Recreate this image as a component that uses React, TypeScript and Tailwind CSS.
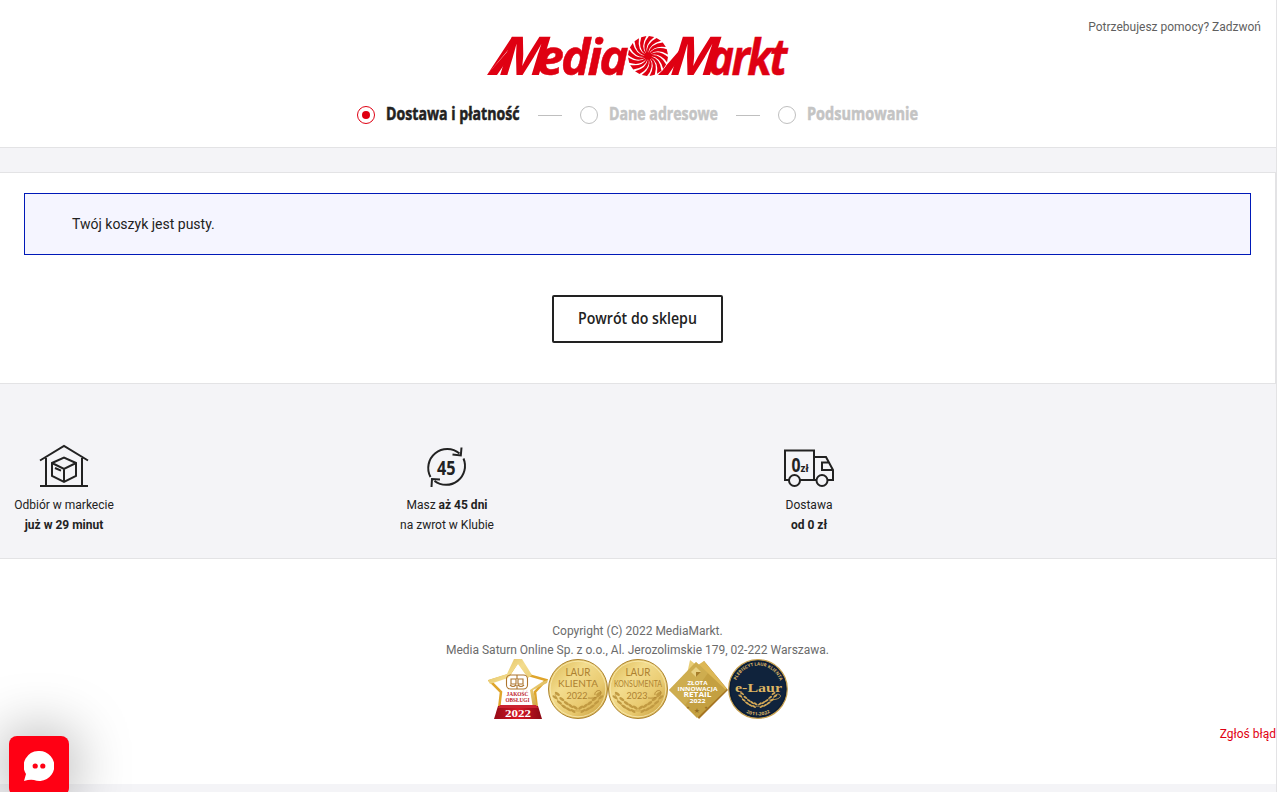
import { useLayoutEffect, useRef, useState, type ReactNode } from 'react';

/** Condenses a single line of text to a given width. */
function Condensed({ width, className, children }: { width: number; className: string; children: ReactNode }) {
  const ref = useRef<HTMLSpanElement>(null);
  const [scale, setScale] = useState(0.78);
  useLayoutEffect(() => {
    if (ref.current) setScale(width / ref.current.offsetWidth);
  }, [width]);
  return (
    <span className="flex" style={{ width }}>
      <span ref={ref} className={`inline-block origin-left whitespace-nowrap ${className}`} style={{ transform: `scaleX(${scale})` }}>
        {children}
      </span>
    </span>
  );
}

const blades = Array.from({ length: 16 }, (_, i) => i * 22.5);

function Logo() {
  return (
    <svg width="300" height="40" viewBox="0 0 300 40" className="mr-px block overflow-visible" fill="#df0012" aria-label="MediaMarkt">
      <g fontFamily="Inter, sans-serif" fontWeight="700">
        <text transform="translate(9 39) skewX(-17)" fontSize="52.500" textLength="45" lengthAdjust="spacingAndGlyphs">M</text>
        <text transform="translate(180 39) skewX(-17)" fontSize="52.500" textLength="45" lengthAdjust="spacingAndGlyphs">M</text>
      </g>
      <path d="M-1 39 31 1H24L-1 39M-1 39 32 1 18 26 9 39ZM170 39 203 1 189 26 180 39Z" />
      <g fontFamily="Open Sans, sans-serif" fontWeight="700" fontStyle="italic" fontSize="51" stroke="#df0012" strokeWidth=".5">
        <text transform="translate(48.500 39)" letterSpacing="-3" textLength="89" lengthAdjust="spacingAndGlyphs">edia</text>
        <text transform="translate(220 39)" letterSpacing="-3" textLength="77" lengthAdjust="spacingAndGlyphs">arkt</text>
      </g>
      <g transform="translate(160 20)">
        <circle r="20.500" fill="#fff" />
        <circle r="3.800" />
        {blades.map((a) => (
          <path key={a} transform={`rotate(${a})`} d="M.300-3Q1-12 13-15.200L8.500-18.100Q-2-12.500-.900-3Z" />
        ))}
      </g>
    </svg>
  );
}

function Step({ label, width, active }: { label: string; width: number; active?: boolean }) {
  return (
    <div className="flex items-center">
      <span className={`mr-[11px] flex size-[18px] items-center justify-center rounded-full border ${active ? 'border-[#df0012]' : 'border-[#bfbfbf]'}`}>
        {active && <span className="size-2 rounded-full bg-[#df0012]" />}
      </span>
      <Condensed width={width} className={`pb-[3px] font-['Open_Sans'] text-[17px] leading-[21px] font-bold [-webkit-text-stroke:0.5px_currentColor] ${active ? 'text-[#222]' : 'text-[#c4c4c4]'}`}>
        {label}
      </Condensed>
    </div>
  );
}

function HouseIcon() {
  return (
    <svg width="50" height="44" viewBox="0 0 50 44" fill="none" stroke="#222" strokeWidth="2">
      <path d="M1 16.500 25 2l24 14.500M7 14v28M43 14v28M1 42h48M13 19l12-5.500L37 19v13l-12 6-12-6ZM13 19l12 6 12-6M25 25v13M16 24l6 2.700" />
    </svg>
  );
}

function ReturnIcon() {
  return (
    <svg width="42" height="44" viewBox="0.500 -1 42 44" fill="none" stroke="#222" strokeWidth="2">
      <path d="M5 32A19 19 0 0 1 34 8.500M38 13.500A19 19 0 0 1 9 36M36 2.500l-.700 8L27 9.500M6 42l.500-8 8 .500" />
      <text x="11.500" y="29.500" fill="#222" stroke="none" fontFamily="Open Sans, sans-serif" fontWeight="700" fontSize="19" textLength="18.500" lengthAdjust="spacingAndGlyphs">45</text>
    </svg>
  );
}

function TruckIcon() {
  return (
    <svg width="50" height="44" viewBox="0 0 50 44" fill="none" stroke="#222" strokeWidth="2" className="mr-px overflow-visible">
      <path d="M5 36H1V6.500h29v29.500H16M30 13h12l7 13v10h-5M30 36h3M45 18.500h-7V26h11" />
      <circle cx="10.500" cy="36.500" r="5.500" />
      <circle cx="38" cy="36.500" r="5.500" />
      <g fill="#222" stroke="none" fontFamily="Open Sans, sans-serif" fontWeight="700">
        <text x="7.500" y="28" fontSize="19.500" textLength="9" lengthAdjust="spacingAndGlyphs">0</text>
        <text x="16.500" y="28" fontSize="10" textLength="8" lengthAdjust="spacingAndGlyphs">zł</text>
      </g>
    </svg>
  );
}

function Benefit({ icon, className, children }: { icon: ReactNode; className: string; children: ReactNode }) {
  return (
    <div className={`flex w-32 flex-col items-center text-center text-xs leading-5 text-[#222] ${className}`}>
      {icon}
      <div className="mt-[7px]">{children}</div>
    </div>
  );
}

function Leaves({ color }: { color: string }) {
  const spots = [-22, -17.5, -13, -8.5, -4, 4, 8.5, 13, 17.5, 22];
  return (
    <g fill={color}>
      <path d="M7 35Q12 53 30 52Q47 53 53 36" fill="none" stroke={color} strokeWidth=".7" />
      {spots.map((x) => {
        const y = 51 - (x * x) / 34;
        const tilt = x < 0 ? 35 : -35;
        return (
          <g key={x} transform={`translate(${30 + x} ${y}) rotate(${tilt})`}>
            <ellipse cx="0" cy="-2.300" rx="3" ry="1.300" />
            <ellipse cx="0" cy="1.800" rx="3" ry="1.200" />
          </g>
        );
      })}
    </g>
  );
}

function Gold({ id }: { id: string }) {
  return (
    <linearGradient id={id} x1="0" y1="0" x2="1" y2="1">
      <stop offset="0" stopColor="#d9b44a" />
      <stop offset=".35" stopColor="#f3dc8e" />
      <stop offset=".65" stopColor="#e9ca70" />
      <stop offset="1" stopColor="#c39735" />
    </linearGradient>
  );
}

function StarBadge() {
  return (
    <svg width="60" height="60" viewBox="0 0 60 60">
      <defs>
        <Gold id="star" />
        <linearGradient id="base">
          <stop offset="0" stopColor="#950a16" />
          <stop offset=".5" stopColor="#d61725" />
          <stop offset="1" stopColor="#8c0914" />
        </linearGradient>
      </defs>
      <path d="M30 2 40 16 58 21 47 33 49 50H11L13 33 2 22 21 16Z" fill="#fff" stroke="#dfa52b" strokeWidth="2.500" />
      <path d="M26 0h8l10 16-4 3L30 5 20 19 2 25 0 21l19-6ZM45 31l5 19-5-1-3-18 12-8 6-2-1 3Z" fill="url(#star)" />
      <path d="M10 47h40l4 13H6Z" fill="url(#base)" />
      <path d="M12 46h36l2 3H10Z" fill="#ca2330" />
      <g fill="none" stroke="#ad742d" strokeWidth="1.100">
        <rect x="18.500" y="16" width="21" height="14" rx="4" />
        <path d="M29 16v4M29 26v4M28 20h-5v5h5ZM30 20h5v5h-5ZM22 26q3 3 6 0M30 26q3 3 6 0" />
      </g>
      <g textAnchor="middle" fontFamily="Liberation Serif, serif" fontWeight="700">
        <text x="29.500" y="37.300" fontSize="5.500" fill="#bd1726" textLength="22" lengthAdjust="spacingAndGlyphs">JAKOŚĆ</text>
        <text x="29.500" y="42.500" fontSize="5.500" fill="#bd1726" textLength="24" lengthAdjust="spacingAndGlyphs">OBSŁUGI</text>
        <text x="30" y="57.500" fontSize="10" fill="#fff" textLength="26" lengthAdjust="spacingAndGlyphs">2022</text>
      </g>
    </svg>
  );
}

function CoinBadge({ id, name, year, nameWidth }: { id: string; name: string; year: string; nameWidth: number }) {
  return (
    <svg width="60" height="60" viewBox="0 0 60 60" className="overflow-visible">
      <defs><Gold id={id} /></defs>
      <circle cx="30" cy="30" r="29.500" fill={`url(#${id})`} stroke="#ad8430" />
      <circle cx="30" cy="30" r="27.800" fill="none" stroke="#f9ebb4" strokeWidth=".8" />
      <Leaves color="#c19a42" />
      <g textAnchor="middle" fill="#ad8130" fontFamily="Lato, sans-serif">
        <text x="30" y="17" fontSize="11" textLength="25" lengthAdjust="spacingAndGlyphs">LAUR</text>
        <text x="30" y="27.500" fontSize="10" textLength={nameWidth} lengthAdjust="spacingAndGlyphs">{name}</text>
        <text x="29" y="39.500" fontSize="10" textLength="21" lengthAdjust="spacingAndGlyphs">{year}</text>
      </g>
      <path d="M40 39c8 1 14-3 13-6s-7-1-6 3" fill="none" stroke="#ad8130" strokeWidth=".8" />
    </svg>
  );
}

function DiamondBadge() {
  return (
    <svg width="60" height="60" viewBox="0 0 60 60">
      <path d="M36 2 60 31 31 60 18 44Z" fill="#a67522" />
      <path d="M22 1 32 9 18 20Z" fill="#e9ce76" />
      <path d="M36 2 59 30 50 34 27 8Z" fill="#ddb855" />
      <path d="M28 3 58 31 29 59 1 31Z" fill="#c4a041" />
      <path d="M28 3 40 14 17 46 1 31Z" fill="#d7b95e" opacity=".5" />
      <path d="m28 8 5 5-5 5-5-5Z" fill="#e8d182" />
      <path d="M28 13h5l-5 5Z" fill="#a77e2a" />
      <g fill="#fff" textAnchor="middle" fontFamily="Open Sans, sans-serif" fontWeight="700">
        <text x="29.500" y="25.500" fontSize="5.500" textLength="20" lengthAdjust="spacingAndGlyphs">ZŁOTA</text>
        <text x="29.500" y="31.500" fontSize="5.500" textLength="40" lengthAdjust="spacingAndGlyphs">INNOWACJA</text>
        <text x="29.500" y="38" fontSize="7" textLength="28" lengthAdjust="spacingAndGlyphs">RETAIL</text>
        <text x="29.500" y="43.500" fontSize="5" textLength="16" lengthAdjust="spacingAndGlyphs">2022</text>
      </g>
      <g fill="#946d22" textAnchor="middle" fontFamily="DejaVu Sans, sans-serif">
        <text x="20" y="50" fontSize="4">★</text>
        <text x="29" y="54" fontSize="7">★</text>
        <text x="38" y="50" fontSize="4">★</text>
      </g>
    </svg>
  );
}

function ELaurBadge() {
  return (
    <svg width="60" height="60" viewBox="0 0 60 60">
      <defs>
        <path id="upper-arc" d="M6.500 30A23.500 23.500 0 0 1 53.500 30" />
        <path id="lower-arc" d="M3.500 30A26.500 26.500 0 0 0 56.500 30" />
      </defs>
      <circle cx="30" cy="30" r="29.300" fill="#10233c" stroke="#c8a04d" strokeWidth="1.200" />
      <circle cx="30" cy="30" r="27.800" fill="none" stroke="#0a1930" strokeWidth=".8" />
      <g fill="#ddb563">
        <text fontFamily="Open Sans, sans-serif" fontWeight="700" fontSize="4.500">
          <textPath href="#upper-arc" startOffset="9" textLength="56" lengthAdjust="spacingAndGlyphs">PLEBISCYT LAUR KLIENTA</textPath>
        </text>
        <text fontFamily="Open Sans, sans-serif" fontWeight="700" fontSize="4.500">
          <textPath href="#lower-arc" startOffset="29" textLength="25" lengthAdjust="spacingAndGlyphs">2011-2022</textPath>
        </text>
        <text x="30.500" y="32.500" textAnchor="middle" fontFamily="Liberation Serif, serif" fontWeight="700" fontSize="13" textLength="47" lengthAdjust="spacingAndGlyphs">e-Laur</text>
      </g>
      <g transform="translate(7 8) scale(.76)"><Leaves color="#d4a957" /></g>
      <path d="M41 41c9 0 13-3 11-5s-6 0-4 2" fill="none" stroke="#d4a957" strokeWidth=".8" />
    </svg>
  );
}

export default function App() {
  return (
    <div className="relative flex h-[792px] w-full flex-col overflow-hidden bg-[#f4f4f7] font-[Roboto,sans-serif]">
      <div className="flex h-full flex-col border-r border-[#e3e3e5]">
        <header className="flex h-[148px] shrink-0 flex-col items-center border-b border-[#e3e3e5] bg-white">
          <div className="flex h-9 w-full items-end justify-end pr-[15px] pb-px text-xs leading-4 text-[#5f5f5f]">
            Potrzebujesz pomocy? Zadzwoń
          </div>
          <Logo />
          <nav className="mt-[28px] mr-[2px] flex h-[22px] items-center">
            <Step label="Dostawa i płatność" width={134} active />
            <span className="mx-[18px] h-px w-6 bg-[#bfbfbf]" />
            <Step label="Dane adresowe" width={109} />
            <span className="mx-[18px] h-px w-6 bg-[#bfbfbf]" />
            <Step label="Podsumowanie" width={111} />
          </nav>
        </header>

        <main className="mt-6 flex h-[212px] shrink-0 flex-col items-center border-y border-r border-[#e3e3e5] bg-white px-6 pt-5">
          <div className="flex h-[62px] w-full items-center border border-[#0019b8] bg-[#f5f5ff] pl-[47px] text-sm text-[#222]">
            Twój koszyk jest pusty.
          </div>
          <button className="mt-10 flex h-12 w-[171px] items-center justify-center rounded-[2px] border-2 border-[#222] pb-[2px] text-[#222]">
            <Condensed width={119} className="font-['Open_Sans'] text-[17px] leading-5 font-semibold">Powrót do sklepu</Condensed>
          </button>
        </main>

        <section className="flex h-[174px] shrink-0 pt-[60px]">
          <Benefit className="" icon={<HouseIcon />}>
            Odbiór w markecie<br /><b>już w 29 minut</b>
          </Benefit>
          <Benefit className="ml-[255px]" icon={<ReturnIcon />}>
            Masz <b>aż 45 dni</b><br />na zwrot w Klubie
          </Benefit>
          <Benefit className="ml-[234px]" icon={<TruckIcon />}>
            Dostawa<br /><b>od 0 zł</b>
          </Benefit>
        </section>

        <footer className="flex h-[226px] shrink-0 flex-col items-center border-t border-[#e3e3e5] bg-white pt-[63px] text-xs leading-[19px] text-[#6b6b6b]">
          <p className="pr-px">Copyright (C) 2022 MediaMarkt.</p>
          <p className="pr-px">Media Saturn Online Sp. z o.o., Al. Jerozolimskie 179, 02-222 Warszawa.</p>
          <div className="-mt-px flex h-[60px]">
            <StarBadge />
            <CoinBadge id="coin-klienta" name="KLIENTA" year="2022" nameWidth={40} />
            <CoinBadge id="coin-konsumenta" name="KONSUMENTA" year="2023" nameWidth={48} />
            <DiamondBadge />
            <ELaurBadge />
          </div>
          <a className="mt-[6px] self-end text-[#df0012]">Zgłoś błąd</a>
        </footer>
      </div>

      <button className="absolute top-[736px] left-[9px] flex size-[60px] items-center justify-center rounded-lg bg-[#ff0014] shadow-[0_0_60px_rgba(0,0,0,0.4)]">
        <svg width="30" height="30" viewBox="0 0 30 30">
          <path d="M15 0a15 15 0 1 1-5 29Q6 28 0 30L2 23A15 15 0 0 1 15 0Z" fill="#fff" />
          <circle cx="11.200" cy="15" r="2.600" fill="#ff0014" />
          <circle cx="18.800" cy="15" r="2.600" fill="#ff0014" />
        </svg>
      </button>
    </div>
  );
}
